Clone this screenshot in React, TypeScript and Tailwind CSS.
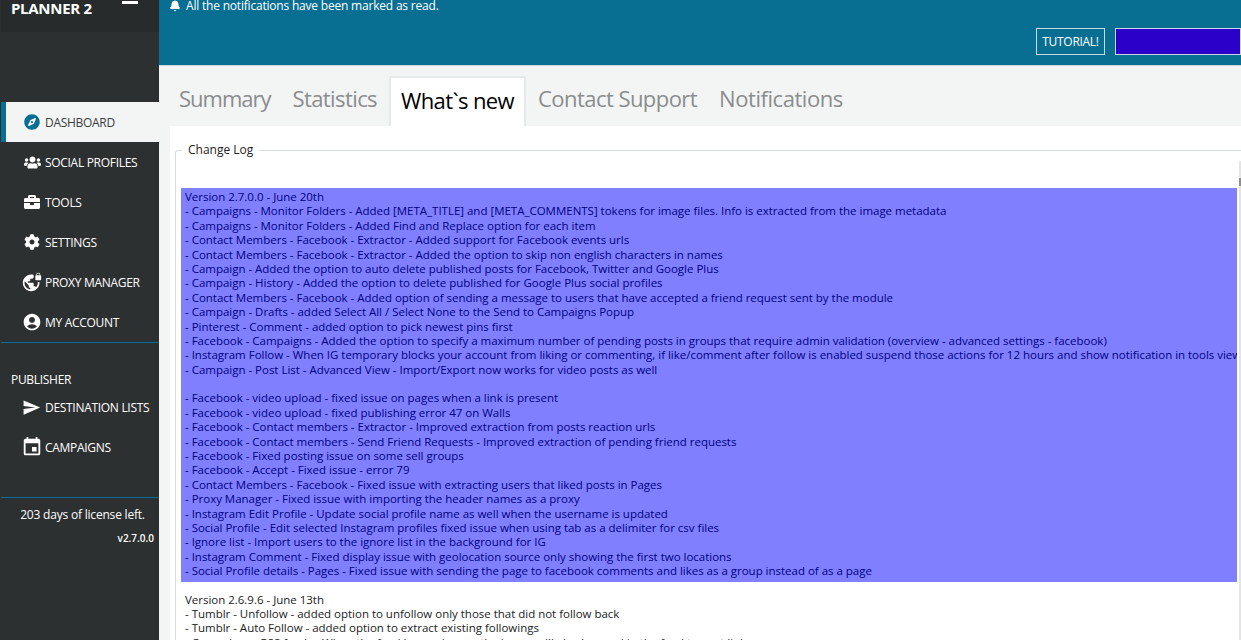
import { Bell } from "lucide-react";
import { FaUsers, FaBriefcase, FaCog, FaCompass } from "react-icons/fa";
import { MdEvent, MdSend, MdVpnLock, MdAccountCircle } from "react-icons/md";
import type { ReactNode } from "react";

const font = "font-['Open_Sans','Noto_Sans',sans-serif]";

interface NavItem {
  label: string;
  icon: ReactNode;
}

const mainNav: NavItem[] = [
  { label: "SOCIAL PROFILES", icon: <FaUsers className="h-[17px] w-[17px]" /> },
  { label: "TOOLS", icon: <FaBriefcase className="h-[16px] w-[16px]" /> },
  { label: "SETTINGS", icon: <FaCog className="h-[16px] w-[16px]" /> },
  { label: "PROXY MANAGER", icon: <MdVpnLock className="-ml-[2px] h-[20px] w-[20px]" /> },
  { label: "MY ACCOUNT", icon: <MdAccountCircle className="-ml-[2px] h-[20px] w-[20px]" /> },
];

const publisherNav: NavItem[] = [
  { label: "DESTINATION LISTS", icon: <MdSend className="-ml-[2px] h-[19px] w-[19px]" /> },
  { label: "CAMPAIGNS", icon: <MdEvent className="-ml-[3px] h-[22px] w-[22px]" /> },
];

const highlighted = [
  "Version 2.7.0.0 - June 20th",
  "- Campaigns - Monitor Folders - Added [META_TITLE] and [META_COMMENTS] tokens for image files. Info is extracted from the image metadata",
  "- Campaigns - Monitor Folders - Added Find and Replace option for each item",
  "- Contact Members - Facebook - Extractor - Added support for Facebook events urls",
  "- Contact Members - Facebook - Extractor - Added the option to skip non english characters in names",
  "- Campaign - Added the option to auto delete published posts for Facebook, Twitter and Google Plus",
  "- Campaign - History - Added the option to delete published for Google Plus social profiles",
  "- Contact Members - Facebook - Added option of sending a message to users that have accepted a friend request sent by the module",
  "- Campaign - Drafts - added Select All / Select None to the Send to Campaigns Popup",
  "- Pinterest - Comment - added option to pick newest pins first",
  "- Facebook - Campaigns - Added the option to specify a maximum number of pending posts in groups that require admin validation (overview - advanced settings - facebook)",
  "- Instagram Follow - When IG temporary blocks your account from liking or commenting, if like/comment after follow is enabled suspend those actions for 12 hours and show notification in tools view",
  "- Campaign - Post List - Advanced View - Import/Export now works for video posts as well",
  "",
  "- Facebook - video upload - fixed issue on pages when a link is present",
  "- Facebook - video upload - fixed publishing error 47 on Walls",
  "- Facebook - Contact members - Extractor - Improved extraction from posts reaction urls",
  "- Facebook - Contact members - Send Friend Requests - Improved extraction of pending friend requests",
  "- Facebook - Fixed posting issue on some sell groups",
  "- Facebook - Accept - Fixed issue - error 79",
  "- Contact Members - Facebook - Fixed issue with extracting users that liked posts in Pages",
  "- Proxy Manager - Fixed issue with importing the header names as a proxy",
  "- Instagram Edit Profile - Update social profile name as well when the username is updated",
  "- Social Profile - Edit selected Instagram profiles fixed issue when using tab as a delimiter for csv files",
  "- Ignore list - Import users to the ignore list in the background for IG",
  "- Instagram Comment - Fixed display issue with geolocation source only showing the first two locations",
  "- Social Profile details - Pages - Fixed issue with sending the page to facebook comments and likes as a group instead of as a page",
];

const plain = [
  "Version 2.6.9.6 - June 13th",
  "- Tumblr - Unfollow - added option to unfollow only those that did not follow back",
  "- Tumblr - Auto Follow - added option to extract existing followings",
  "- Campaigns - RSS feeds - When the feed has an image, the image will also be used in the feed to post link",
];

function NavRow({ item }: { item: NavItem }) {
  return (
    <div className="flex h-10 items-center pl-[23px] text-white">
      <span className="flex w-[21px] shrink-0 justify-start">{item.icon}</span>
      <span className="whitespace-nowrap pt-[2px] text-[12px] tracking-[-0.3px]">{item.label}</span>
    </div>
  );
}

export default function App() {
  return (
    <div className={`flex h-[640px] w-[1241px] overflow-hidden bg-[#f3f4f4] ${font}`}>
      <aside className="flex w-[159px] shrink-0 flex-col bg-[#2d3031] pl-px">
        <div className="flex h-8 items-start justify-between bg-[#282b2c] pl-[10px] pr-[21px]">
          <span className="text-[15px] font-bold leading-[17px] tracking-[-0.3px] text-white">PLANNER 2</span>
          <span className="mt-px h-[3px] w-4 bg-white" />
        </div>

        <div className="mt-[70px] flex h-10 items-center border-l-[5px] border-[#086e92] bg-[#f3f4f4] pl-[18px] text-[#3a3d3e]">
          <FaCompass className="mr-[5px] h-4 w-4 shrink-0 text-[#086e92]" />
          <span className="pt-[2px] text-[12px] tracking-[-0.3px]">DASHBOARD</span>
        </div>
        {mainNav.map((item) => (
          <NavRow key={item.label} item={item} />
        ))}

        <div className="border-t border-[#086e92] pl-[10px] pt-[30px] text-[12px] leading-[14px] tracking-[-0.3px] text-white">
          PUBLISHER
        </div>
        {publisherNav.map((item) => (
          <NavRow key={item.label} item={item} />
        ))}

        <div className="mt-[30px] border-t border-[#086e92] pt-[8px] text-white">
          <div className="pl-[5px] text-center text-[12px] tracking-[-0.2px]">203 days of license left.</div>
          <div className="mt-[7px] pr-[5px] text-right text-[10px] font-semibold">v2.7.0.0</div>
        </div>
      </aside>

      <main className="flex min-w-0 flex-1 flex-col">
        <header className="flex h-[66px] shrink-0 flex-col border-b border-[#c8d6dc] bg-[#086e92] pl-[10px]">
          <div className="flex h-3 items-center gap-[5px] text-[12px] text-white">
            <Bell className="h-3 w-3 fill-white" />
            <span className="tracking-[-0.2px]">All the notifications have been marked as read.</span>
          </div>
          <div className="mt-4 flex justify-end gap-[10px]">
            <button className="h-[27px] w-[69px] border border-[#c6dbe4] text-[12px] tracking-[-0.3px] text-white">
              TUTORIAL!
            </button>
            <div className="h-[27px] w-[126px] border border-[#c6dbe4] bg-[#2b00c8]" />
          </div>
        </header>

        <nav className="flex h-[60px] shrink-0 items-end pl-[9px] text-[22px] text-[#8a8d8e]">
          <div className="flex h-[50px] items-center px-[11px] pb-[5px] tracking-[-1px]">Summary</div>
          <div className="flex h-[50px] items-center pb-[5px] pl-[11px] pr-[12px] tracking-[-0.6px]">Statistics</div>
          <div className="mr-px flex h-[50px] items-center border-x-2 border-t-2 border-[#e6e9e9] bg-white px-[10px] pb-[3px] tracking-[-0.6px] text-black">
            What`s new
          </div>
          <div className="flex h-[50px] items-center px-[11px] pb-[5px] tracking-[-0.55px]">Contact Support</div>
          <div className="flex h-[50px] items-center px-[11px] pb-[5px] tracking-[-0.45px]">Notifications</div>
        </nav>

        <section className="ml-[11px] min-h-0 flex-1 overflow-hidden bg-white pl-[5px] pt-[24px]">
          <div className="relative h-[600px] rounded-tl-[3px] border-l border-t border-[#d5dde3] pl-[5px] pt-[37px]">
            <span className="absolute left-[6px] top-[-9px] bg-white px-[6px] text-[12px] leading-4 text-[#222]">
              Change Log
            </span>
            <div className="w-[1056px] overflow-hidden whitespace-nowrap text-[11.5px] leading-[14.4px] tracking-[-0.015px]">
              <div className="bg-[#8080ff] pb-[3px] pl-[4px] pt-[2px] text-[#000080]">
                {highlighted.map((line, i) => (
                  <div key={i} className={line === "" ? "h-[14px]" : ""}>
                    {line}
                  </div>
                ))}
              </div>
              <div className="pl-[4px] pt-[11px] text-[#222]">
                {plain.map((line) => (
                  <div key={line}>{line}</div>
                ))}
              </div>
            </div>
            <div className="absolute right-0 top-[10px] h-[600px] w-[2px] bg-[#e4e4e4]">
              <div className="mt-[17px] h-2 w-full bg-[#8e8e8e]" />
            </div>
          </div>
        </section>
      </main>
    </div>
  );
}
